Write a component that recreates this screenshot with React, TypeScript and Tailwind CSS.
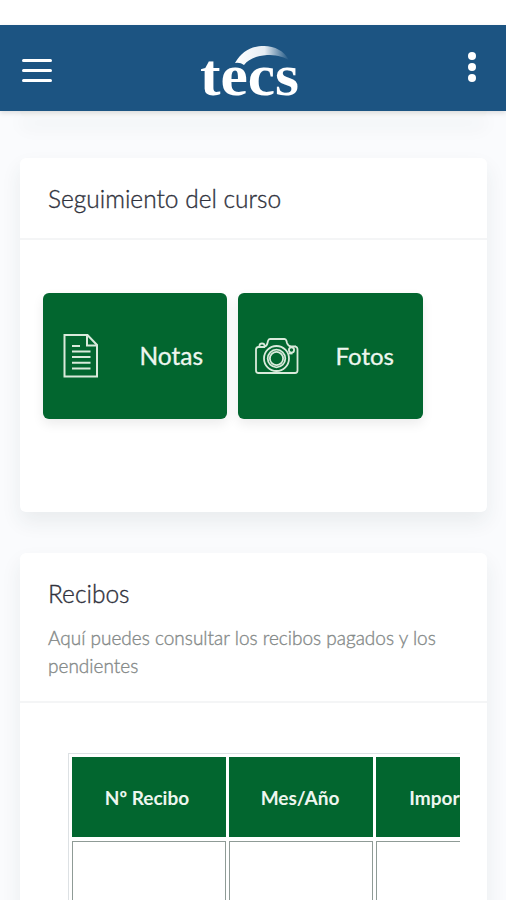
import type { ReactNode } from "react";

function Logo() {
  return (
    <svg width="104" height="70" viewBox="0 0 104 70" className="block overflow-visible">
      <defs>
        <linearGradient id="arc" x1="0" y1="0" x2="1" y2="0">
          <stop offset="0" stopColor="#fff" />
          <stop offset="0.55" stopColor="#e6edf3" />
          <stop offset="1" stopColor="#1c5482" />
        </linearGradient>
      </defs>
      <path d="M36 21C43 9 53 4 65 4C76 4 85 9 90 18C83 14 76 13 68 13C57 14 50 17 45 23Q41 20 36 21Z" fill="url(#arc)" />
      <text
        x="1"
        y="53"
        fontFamily="'Liberation Serif', serif"
        fontSize="59"
        fontWeight="700"
        fill="#fff"
        textLength="99"
        lengthAdjust="spacingAndGlyphs"
      >
        tecs
      </text>
    </svg>
  );
}

function NotesIcon() {
  return (
    <svg width="36" height="44" viewBox="0 0 36 44" fill="none" stroke="#d9eadb" strokeWidth="2">
      <path d="M1.500 1H24.500L34 11V42.500H1.500Z" />
      <path d="M24 1V11.500H34" />
      <path d="M9 12H17M9 17.500H27.500M9 23H27.500M9 28.800H27.500M9 34.500H27.500" />
    </svg>
  );
}

function CameraIcon() {
  return (
    <svg width="44" height="37" viewBox="0 0 44 37" fill="none" stroke="#d9eadb" strokeWidth="1.8" strokeLinejoin="round">
      <path d="M10 9H3.500Q1 9 1 11.500V32.500Q1 35 3.500 35H40Q42.500 35 42.500 32.500V11.500Q42.500 9 40.500 8.500" />
      <path d="M4.500 9V7.500Q4.500 5.500 7 5.500Q9.500 5.500 9.500 7.500V8.500Q12 8 12.500 5L13 3Q13.500 1 15 1H29.500Q31 1 31.500 3L32 5Q33 8 36 8.500H41" />
      <circle cx="21.500" cy="20.500" r="12.500" />
      <circle cx="21.500" cy="20.500" r="8.800" />
      <circle cx="21.500" cy="20.500" r="6.600" />
      <circle cx="36.500" cy="12" r="2.600" />
      <path d="M34 15.500H37.500" />
    </svg>
  );
}

function Card({ title, subtitle, className, children }: { title: string; subtitle?: string; className: string; children: ReactNode }) {
  return (
    <section className={`ml-5 w-[467px] rounded-md bg-white shadow-[0_10px_20px_rgba(40,60,65,0.08)] ${className}`}>
      <div className="border-b-2 border-[#f4f5f6] px-7 pt-[25px] pb-[23px]">
        <h2 className="text-[24.5px] leading-8 font-light whitespace-nowrap text-[#30323d] [-webkit-text-stroke:0.35px_#30323d]">{title}</h2>
        {subtitle && (
          <p className="mt-[14px] -mb-0.5 text-[19px] leading-7 font-light text-[#858a89] [-webkit-text-stroke:0.35px_#858a89]">
            {subtitle}
          </p>
        )}
      </div>
      {children}
    </section>
  );
}

function Tile({ icon, label, className }: { icon: ReactNode; label: string; className: string }) {
  return (
    <button
      className={`flex h-[126px] items-center justify-between rounded-md bg-[#02662f] text-[#eef6ef] shadow-[0_5px_12px_rgba(0,0,0,0.08)] [-webkit-text-stroke:0.3px_#eef6ef] ${className}`}
    >
      {icon}
      <span>{label}</span>
    </button>
  );
}

const columns = [
  { label: "Nº Recibo", pad: "pr-1" },
  { label: "Mes/Año", pad: "pr-0.5" },
  { label: "Importe", pad: "pl-0.5" },
];

export default function App() {
  return (
    <div className="h-[900px] w-[506px] overflow-hidden bg-[#fafbfd] pt-[25px] font-['Lato',sans-serif] shadow-[inset_0_25px_0_#fff]">
      <header className="relative z-10 flex h-[86px] items-start justify-between bg-[#1c5482] pr-[29px] pl-[22px] shadow-[0_2px_5px_rgba(0,0,0,0.12)]">
        <button aria-label="Menú" className="mt-[34px] flex flex-col gap-[7px]">
          <span className="h-[3px] w-[30px] rounded-full bg-white" />
          <span className="h-[3px] w-[30px] rounded-full bg-white" />
          <span className="h-[3px] w-[30px] rounded-full bg-white" />
        </button>
        <div className="mt-[17px] -ml-[18px]">
          <Logo />
        </div>
        <button aria-label="Opciones" className="mt-[27px] mr-[1px] flex flex-col gap-[3px]">
          <span className="size-2 rounded-full bg-white" />
          <span className="size-2 rounded-full bg-white" />
          <span className="size-2 rounded-full bg-white" />
        </button>
      </header>

      <div className="ml-5 h-[6px] w-[467px] rounded-b-md bg-[#f7f8f8] shadow-[0_9px_18px_rgba(40,60,65,0.08)]" />

      <Card title="Seguimiento del curso" className="mt-[41px] h-[354px]">
        <div className="flex gap-[11px] pt-[53px] pl-[23px]">
          <Tile icon={<NotesIcon />} label="Notas" className="w-[184px] pr-6 pl-5 text-[24.5px]" />
          <Tile icon={<CameraIcon />} label="Fotos" className="w-[185px] pr-[29px] pl-[17px] text-[24px]" />
        </div>
      </Card>

      <Card title="Recibos" subtitle="Aquí puedes consultar los recibos pagados y los pendientes" className="mt-[41px] h-[400px]">
        <div className="mt-[50px] ml-12 w-[392px] overflow-hidden">
          <div className="grid w-[440px] grid-cols-[154px_144px_132px] gap-x-[3px] gap-y-[4px] border border-[#dde1e4] p-[3px]">
            {columns.map(({ label, pad }) => (
              <div key={label} className={`flex h-20 items-center justify-center bg-[#02662f] pt-0.5 text-[19px] font-bold text-[#eef6ef] ${pad}`}>
                {label}
              </div>
            ))}
            {columns.map(({ label }) => (
              <div key={label} className="h-24 border border-[#8f9b96]" />
            ))}
          </div>
        </div>
      </Card>
    </div>
  );
}
